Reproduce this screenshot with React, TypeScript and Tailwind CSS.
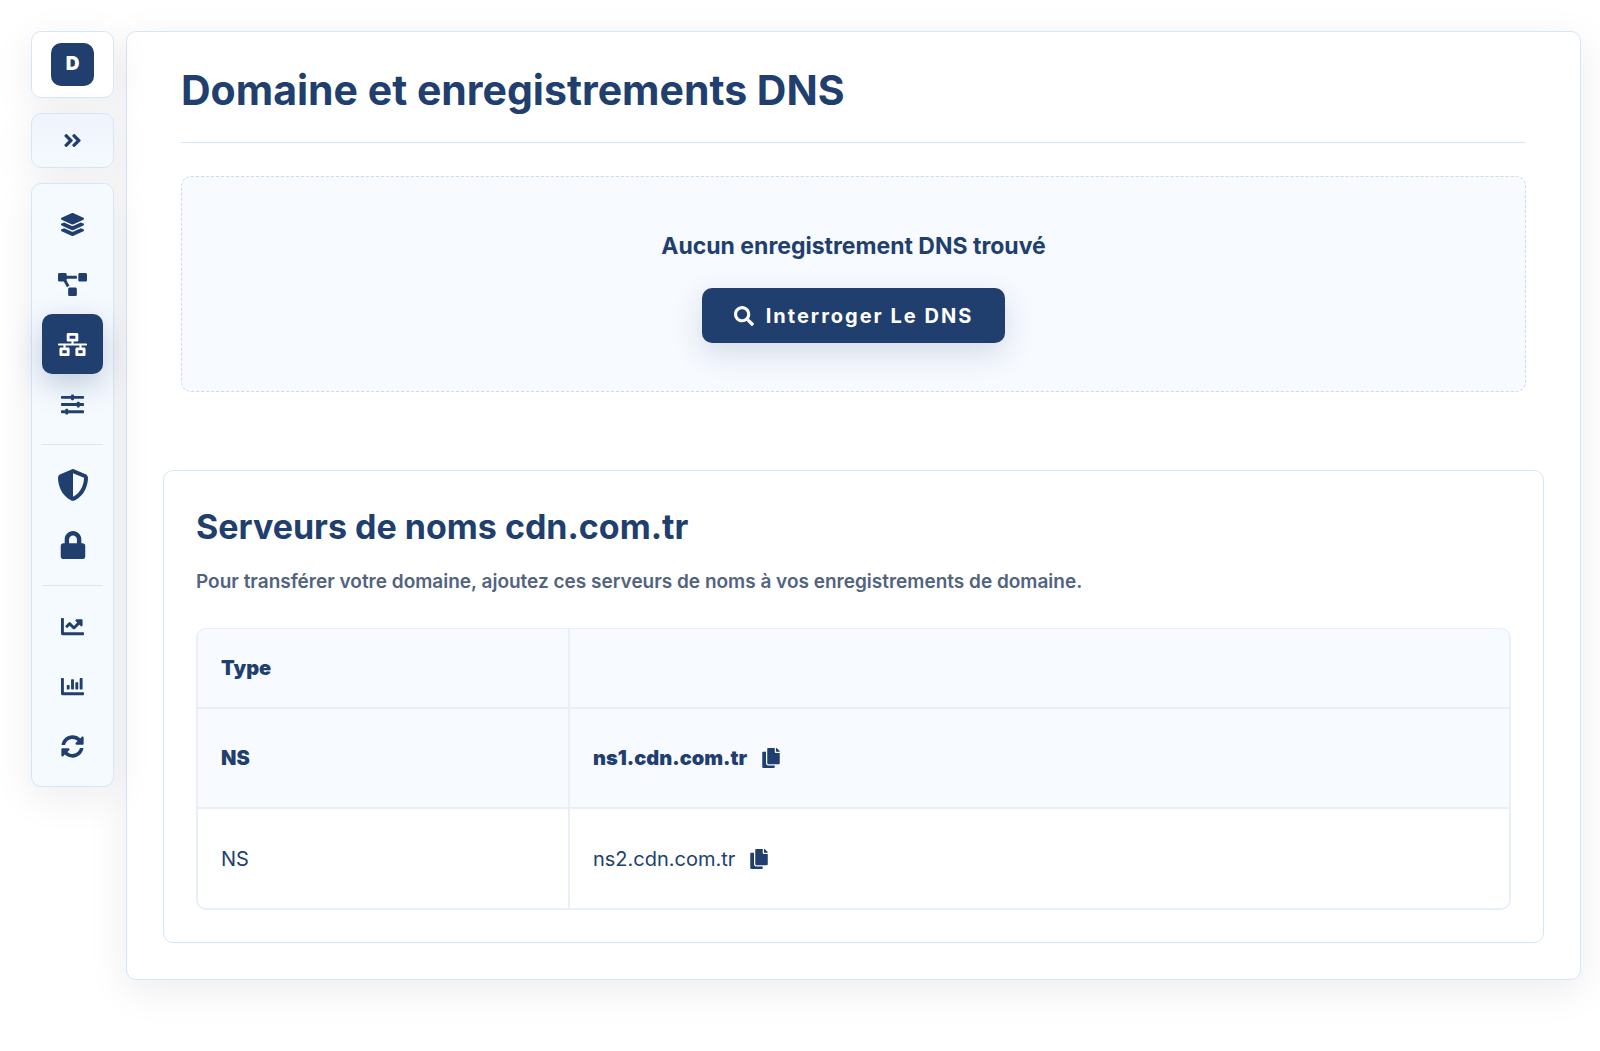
import type { ReactNode } from "react";
import {
  FaAngleDoubleRight,
  FaChartBar,
  FaChartLine,
  FaCopy,
  FaLayerGroup,
  FaLock,
  FaNetworkWired,
  FaProjectDiagram,
  FaSearch,
  FaSlidersH,
  FaSyncAlt,
} from "react-icons/fa";
import { FaShieldHalved } from "react-icons/fa6";

const CARD_SHADOW = "shadow-[0_10px_40px_rgba(20,20,60,0.08)]";

interface NavItem {
  label: string;
  icon: ReactNode;
  active?: boolean;
}

const NAV_GROUPS: NavItem[][] = [
  [
    { label: "Services", icon: <FaLayerGroup size={23} /> },
    { label: "Topologie", icon: <FaProjectDiagram size={29} /> },
    { label: "DNS", icon: <FaNetworkWired size={29} />, active: true },
    { label: "Paramètres", icon: <FaSlidersH size={23} /> },
  ],
  [
    { label: "Pare-feu", icon: <FaShieldHalved size={32} /> },
    { label: "SSL", icon: <FaLock size={28} /> },
  ],
  [
    { label: "Statistiques", icon: <FaChartLine size={23} /> },
    { label: "Rapports", icon: <FaChartBar size={23} /> },
    { label: "Purge", icon: <FaSyncAlt size={23} /> },
  ],
];

const NAME_SERVERS = ["ns1.cdn.com.tr", "ns2.cdn.com.tr"];

function Sidebar() {
  return (
    <aside className="relative z-10 flex w-[83px] shrink-0 flex-col gap-[15px]">
      <div className={`flex justify-center rounded-[10px] border border-[#d5e6f7] bg-white py-[11px] ${CARD_SHADOW}`}>
        <a
          href="#"
          className="flex size-[43px] items-center justify-center rounded-[10px] bg-[#213f6e] text-[19px] font-black text-white"
        >
          D
        </a>
      </div>

      <button
        type="button"
        aria-label="Déplier le menu"
        className={`flex h-[55px] items-center justify-center rounded-[10px] border border-[#d5e6f7] bg-linear-to-b from-[#eff4fd] to-[#f5faff] ${CARD_SHADOW}`}
      >
        <FaAngleDoubleRight size={21} />
      </button>

      <nav className={`rounded-[10px] border border-[#d5e6f7] bg-[#f5faff] p-[10px] ${CARD_SHADOW}`}>
        {NAV_GROUPS.map((group, i) => (
          <div key={group[0].label}>
            {i > 0 && <hr className="my-[10px] border-[#d9e7f5]" />}
            {group.map((item) => (
              <a
                key={item.label}
                href="#"
                aria-label={item.label}
                className={
                  item.active
                    ? "flex h-[60px] items-center justify-center rounded-[10px] bg-[#213f6e] text-white shadow-[0_10px_30px_rgba(33,63,110,0.25)]"
                    : "flex h-[60px] items-center justify-center rounded-[10px]"
                }
              >
                {item.icon}
              </a>
            ))}
          </div>
        ))}
      </nav>
    </aside>
  );
}

function EmptyRecords() {
  return (
    <div className="flex flex-col items-center gap-[27px] rounded-[10px] border border-dashed border-[#c6dcf1] bg-[#f7faff] pt-[54px] pb-12">
      <p className="text-[23px] leading-[30px] font-bold">Aucun enregistrement DNS trouvé</p>
      <button
        type="button"
        className="flex h-[55px] items-center gap-3 rounded-[10px] bg-[#213f6e] px-8 text-xl font-bold tracking-[2px] text-white shadow-[0_10px_30px_rgba(33,63,110,0.16)]"
      >
        <FaSearch size={20} />
        Interroger Le DNS
      </button>
    </div>
  );
}

function NameServers() {
  return (
    <section className="rounded-[10px] border border-[#d5e6f7] p-8">
      <h2 className="pt-1 text-[34px] leading-[40px] font-bold">Serveurs de noms cdn.com.tr</h2>
      <p className="mt-[21px] mb-8 text-[19px] leading-[28px] font-semibold text-[#516380]">
        Pour transférer votre domaine, ajoutez ces serveurs de noms à vos enregistrements de domaine.
      </p>

      <div className="overflow-hidden rounded-[10px] border-2 border-t border-[#e8eff8]">
        <table className="w-full border-collapse text-left text-xl">
          <thead>
            <tr className="h-[79px] border-b-2 border-[#e8eff8] bg-[#f7faff]">
              <th className="w-[371px] border-r-2 border-[#e8eff8] px-[23px] font-black">Type</th>
              <th className="px-[23px]" />
            </tr>
          </thead>
          <tbody>
            {NAME_SERVERS.map((host, i) => (
              <tr
                key={host}
                className={i === 0 ? "h-[100px] border-b-2 border-[#e8eff8] bg-[#f7faff] font-black" : "h-[100px]"}
              >
                <td className="border-r-2 border-[#e8eff8] px-[23px]">NS</td>
                <td className="px-[23px]">
                  <div className="flex items-center gap-[14px]">
                    {host}
                    <button type="button" aria-label={`Copier ${host}`}>
                      <FaCopy size={20} />
                    </button>
                  </div>
                </td>
              </tr>
            ))}
          </tbody>
        </table>
      </div>
    </section>
  );
}

export default function App() {
  return (
    <div className="flex min-h-screen items-start gap-3 bg-white py-[31px] pr-[19px] pl-[31px] font-['Inter',sans-serif] text-[#213f6e]">
      <Sidebar />

      <main className={`min-w-0 flex-1 rounded-[10px] border border-[#d5e6f7] bg-white px-9 pt-[33px] pb-9 ${CARD_SHADOW}`}>
        <div className="px-[18px]">
          <h1 className="border-b border-[#d5e6f7] pb-[27px] text-[41px] leading-[50px] font-bold">
            Domaine et enregistrements DNS
          </h1>
          <div className="pt-[33px] pb-[78px]">
            <EmptyRecords />
          </div>
        </div>
        <NameServers />
      </main>
    </div>
  );
}
